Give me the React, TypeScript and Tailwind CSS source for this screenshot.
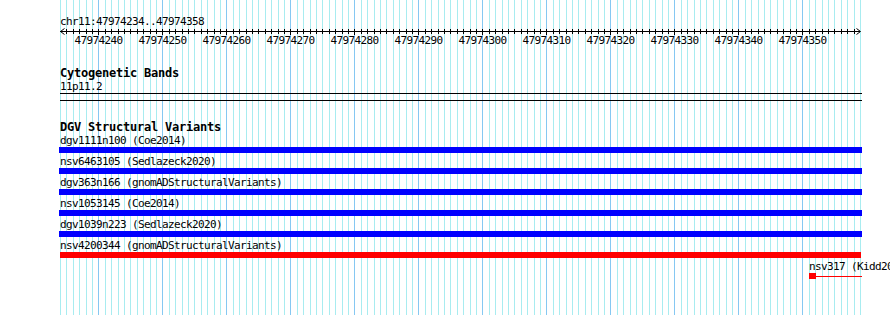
import React from "react";

const START = 47974234;
const N = 125;
const PX = 6.4;

const mono = { fontFamily: '"DejaVu Sans Mono", "Liberation Mono", monospace' };

function GridLines() {
  const lines = [];
  for (let i = 0; i <= N; i++) {
    const x = Math.round(60 + i * PX) + 0.5;
    const major = (START + i) % 10 === 0;
    lines.push(
      <line key={i} x1={x} x2={x} y1={0} y2={315} stroke={major ? "#86c8f2" : "#a8ecf0"} strokeWidth={1} />
    );
  }
  return (
    <svg className="absolute left-0 top-0" width={890} height={315}>
      {lines}
    </svg>
  );
}

function Ruler() {
  const ticks = [];
  const labels = [];
  for (let i = 1; i < N; i++) {
    const x = Math.round(i * PX) + 0.5;
    const major = (START + i) % 10 === 0;
    ticks.push(<line key={i} x1={x} x2={x} y1={1} y2={major ? 7 : 6} stroke="#000" strokeWidth={1} />);
    if (major) {
      labels.push(
        <text
          key={"t" + i}
          x={x}
          y={16}
          textAnchor="middle"
          fontSize={11}
          letterSpacing={-0.62}
          fill="#000"
          style={mono}
        >
          {START + i}
        </text>
      );
    }
  }
  return (
    <svg width={830} height={20} className="block overflow-visible">
      <line x1={0} x2={800} y1={3.5} y2={3.5} stroke="#000" strokeWidth={1} />
      <polyline points="4.5,0.5 0.5,3.5 4.5,6.5" fill="none" stroke="#000" strokeWidth={1} />
      <polyline points="796.5,0.5 800.5,3.5 796.5,6.5" fill="none" stroke="#000" strokeWidth={1} />
      {ticks}
      {labels}
    </svg>
  );
}

const variants: { label: string; color: string }[] = [
  { label: "dgv1111n100 (Coe2014)", color: "blue" },
  { label: "nsv6463105 (Sedlazeck2020)", color: "blue" },
  { label: "dgv363n166 (gnomADStructuralVariants)", color: "blue" },
  { label: "nsv1053145 (Coe2014)", color: "blue" },
  { label: "dgv1039n223 (Sedlazeck2020)", color: "blue" },
  { label: "nsv4200344 (gnomADStructuralVariants)", color: "red" },
];

const small = "h-[13px] leading-[13px] text-[11px] tracking-[-0.62px] text-black whitespace-nowrap";
const bold = "h-[13px] leading-[13px] text-[12px] font-bold tracking-[-0.22px] text-black whitespace-nowrap";

export default function App() {
  return (
    <div className="relative w-[890px] h-[315px] overflow-hidden bg-white" style={mono}>
      <GridLines />
      <div className="relative pl-[60px] pt-[15px] flex flex-col">
        <div className={small}>chr11:47974234..47974358</div>
        <Ruler />
        <div className={bold + " mt-[19px]"}>Cytogenetic Bands</div>
        <div className={small}>11p11.2</div>
        <div className="h-[8px] w-[802px] border-t border-b border-black" />
        <div className={bold + " mt-[20px]"}>DGV Structural Variants</div>
        <div className="flex flex-col gap-[2px]">
          {variants.map((v) => (
            <div key={v.label} className="flex flex-col">
              <div className={small}>{v.label}</div>
              {v.color === "blue" ? (
                <div className="h-[6px] w-[803px] -ml-px bg-[#0000ff]" />
              ) : (
                <div className="h-[6px] w-[801px] bg-[#ff0000]" />
              )}
            </div>
          ))}
          <div className="flex flex-col ml-[749px]">
            <div className={small}>nsv317 (Kidd2008)</div>
            <div className="flex items-center h-[6px]">
              <div className="h-[6px] w-[7px] bg-[#ff0000]" />
              <div className="h-px w-[46px] bg-[#ff0000]" />
            </div>
          </div>
        </div>
      </div>
    </div>
  );
}
